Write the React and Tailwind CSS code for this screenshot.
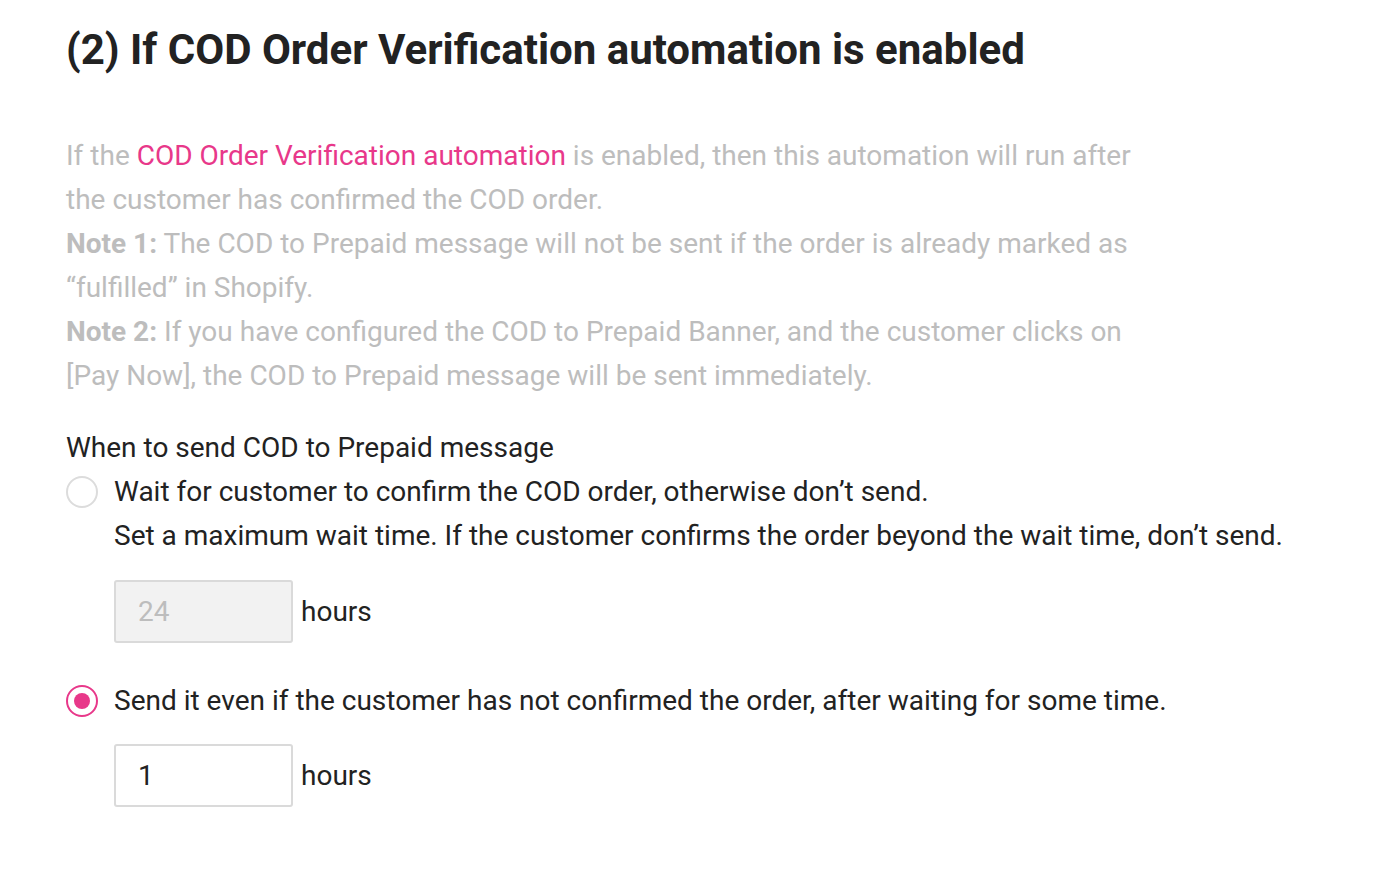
import React from 'react';

const Radio = ({ checked }) => (
  <span
    className={`flex h-[32px] w-[32px] shrink-0 items-center justify-center rounded-full border-2 ${
      checked ? 'border-[#e8388a]' : 'border-[#dcdcdc]'
    }`}
  >
    {checked && <span className="h-[16px] w-[16px] rounded-full bg-[#e8388a]" />}
  </span>
);

const HoursInput = ({ value, disabled }) => (
  <div className="flex items-center">
    <div
      className={`flex h-[63px] w-[179px] items-center rounded-[3px] border-2 border-[#dadada] pl-[22px] text-[28px] ${
        disabled ? 'bg-[#f2f2f2] text-[#bdbdbd]' : 'bg-white text-[#222]'
      }`}
    >
      {value}
    </div>
    <span className="ml-[8px] text-[28px] text-[#222]">hours</span>
  </div>
);

export default function App() {
  return (
    <div className="min-h-screen bg-white pl-[66px] pt-[22px] font-['Roboto',sans-serif]">
      <h1 className="text-[42px] font-bold leading-[56px] text-[#222]">
        (2) If COD Order Verification automation is enabled
      </h1>

      <div className="mt-[56px] w-[1075px] text-[28px] leading-[44px] text-[#bdbdbd]">
        <p>
          If the <span className="text-[#e8388a]">COD Order Verification automation</span> is enabled, then this
          automation will run after the customer has confirmed the COD order.
        </p>
        <p>
          <span className="font-bold">Note 1:</span> The COD to Prepaid message will not be sent if the order is
          already marked as “fulfilled” in Shopify.
        </p>
        <p>
          <span className="font-bold">Note 2:</span> If you have configured the COD to Prepaid Banner, and the
          customer clicks on [Pay Now], the COD to Prepaid message will be sent immediately.
        </p>
      </div>

      <div className="mt-[28px] text-[28px] leading-[44px] text-[#222]">
        <p>When to send COD to Prepaid message</p>

        <div className="flex items-start gap-[16px]">
          <div className="flex h-[44px] items-center">
            <Radio />
          </div>
          <div>
            <p>Wait for customer to confirm the COD order, otherwise don’t send.</p>
            <p>Set a maximum wait time. If the customer confirms the order beyond the wait time, don’t send.</p>
            <div className="mt-[22px]">
              <HoursInput value="24" disabled />
            </div>
          </div>
        </div>

        <div className="mt-[36px] flex items-center gap-[16px]">
          <Radio checked />
          <p>Send it even if the customer has not confirmed the order, after waiting for some time.</p>
        </div>
        <div className="ml-[48px] mt-[21px]">
          <HoursInput value="1" />
        </div>
      </div>
    </div>
  );
}
